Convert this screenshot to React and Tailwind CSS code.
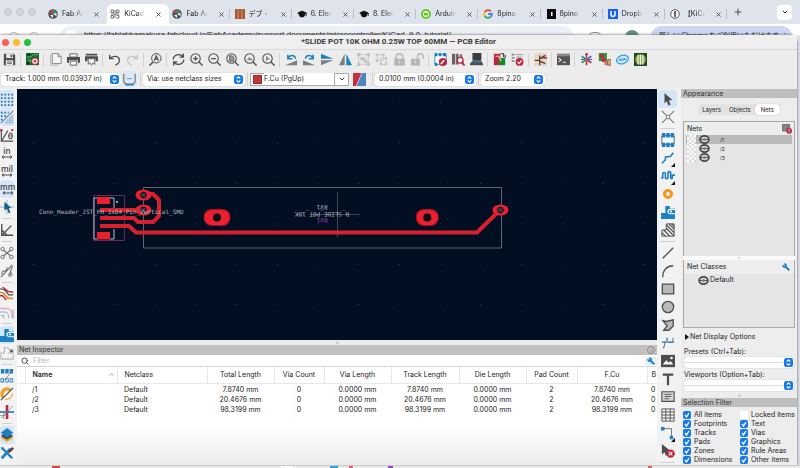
import React from "react";
import { X, Plus, ChevronDown, ChevronUp, Search, GraduationCap, Wrench } from "lucide-react";

const G = "#4d4d4d";
const B = "#1a81c4";
const R = "#bf2641";
const L = "#a9a9a9";

const icons = {
  save: (
    <>
      <path d="M1 1h12l2 2v12H1z" fill={G} />
      <path d="M4 1h8v5H4zM3.500 9h9v6h-9z" fill="#ededed" />
      <path d="M9 2h2v3H9z" fill={G} />
      <path d="M5 11h6M5 13h6" stroke={G} />
    </>
  ),
  board: (
    <>
      <path d="M0 0h16v15H0z" fill="#146b2a" />
      <path d="M1 5h5l3-3h6M2 9h4M3 13l3-3" stroke="#5fd06e" fill="none" />
      <path d="M2 1h3v2H2zM1 11h3v3H1z" fill="#0b2e12" />
      <circle cx="11" cy="10" r="4" fill="#eee" stroke={R} strokeWidth="1.300" />
      <circle cx="11" cy="10" r="1.500" fill={R} />
    </>
  ),
  page: (
    <>
      <path d="M2 2v13h10" fill="none" stroke={L} />
      <path d="M4 .5h7l4 4V13H4z" fill="#f4f4f4" stroke="#777" />
      <path d="M11 .5v4h4" fill="none" stroke="#777" />
    </>
  ),
  print: (
    <>
      <path d="M3.500 1h9v4h-9z" fill="#f5f5f5" stroke={G} />
      <path d="M0 5h16v7h-2.500V9h-11v3H0z" fill={G} />
      <path d="M4 10h8v5H4z" fill="#f5f5f5" stroke={G} />
    </>
  ),
  plot: (
    <>
      <path d="M1 1h14v2H1zM0 4h16v6h-3V7H3v3H0z" fill={G} />
      <path d="M4 7h8v7l-2-2-2 3-2-3-2 2z" fill="#f5f5f5" stroke={G} />
    </>
  ),
  undo: <path d="M2 2v5h5M2 7c3-4 12-4 12 2 0 3-2 5-5 6" fill="none" stroke={G} strokeWidth="1.600" />,
  redo: <path d="M14 2v5H9M14 7C11 3 2 3 2 9c0 3 2 5 5 6" fill="none" stroke="#c4c4c4" strokeWidth="1.600" />,
  find: (
    <>
      <circle cx="9" cy="6.500" r="5.800" fill="none" stroke={G} strokeWidth="1.200" />
      <path d="M5 11l-4.500 4.500" stroke={G} strokeWidth="1.800" />
      <path d="M6.500 9.500L9 3.500l2.500 6M7.500 7.500h3" fill="none" stroke={G} strokeWidth="1.500" />
    </>
  ),
  refresh: (
    <path d="M1.500 8C1.500 2 10 0 13.500 4.500M14 .5v4.500H9.500M14.500 8c0 6-8.500 8-12 3.500M2 15.500V11h4.500" fill="none" stroke={G} strokeWidth="1.600" />
  ),
  zin: (
    <>
      <circle cx="6.800" cy="6.800" r="5.800" fill="none" stroke={G} strokeWidth="1.300" />
      <path d="M11 11l4.500 4.500M4 6.800h5.600M6.800 4v5.600" stroke={G} strokeWidth="1.600" />
    </>
  ),
  zout: (
    <>
      <circle cx="6.800" cy="6.800" r="5.800" fill="none" stroke={G} strokeWidth="1.300" />
      <path d="M11 11l4.500 4.500M4 6.800h5.600" stroke={G} strokeWidth="1.600" />
    </>
  ),
  zfit: (
    <>
      <circle cx="6.800" cy="6.800" r="5.800" fill="none" stroke={G} strokeWidth="1.300" />
      <path d="M11 11l4.500 4.500" stroke={G} strokeWidth="1.600" />
      <path d="M4.500 3.500h3l2 1.500v5h-5z" fill="#999" stroke={G} />
    </>
  ),
  zobj: (
    <>
      <circle cx="6.800" cy="6.800" r="5.800" fill="none" stroke={G} strokeWidth="1.300" />
      <path d="M11 11l4.500 4.500" stroke={G} strokeWidth="1.600" />
      <path d="M3.500 9l3-4 1.500 2 1-1 1.500 3z" fill="#888" />
    </>
  ),
  zsel: (
    <>
      <circle cx="6.800" cy="6.800" r="5.800" fill="none" stroke={G} strokeWidth="1.300" />
      <path d="M11 11l4.500 4.500" stroke={G} strokeWidth="1.600" />
      <path d="M5 3l5 5H7.500L5 10z" fill="#888" />
    </>
  ),
  ccw: (
    <>
      <path d="M0 15l15-6v6z" fill="#7d7d7d" />
      <path d="M4 6c2-4 8-4 9 1M3.500 2v5H9" fill="none" stroke={B} strokeWidth="2" />
    </>
  ),
  cw: (
    <>
      <path d="M15 15L0 9v6z" fill="#7d7d7d" />
      <path d="M12 6C10 2 4 2 3 7M12.500 2v5H7" fill="none" stroke={B} strokeWidth="2" />
    </>
  ),
  flip: (
    <>
      <path d="M0 1l15 6H0z" fill={B} />
      <path d="M0 15l15-6H0z" fill="#7d7d7d" />
    </>
  ),
  mirror: (
    <>
      <path d="M7 1v14H0z" fill="#7d7d7d" />
      <path d="M9 1v14h7z" fill={B} />
    </>
  ),
  group: (
    <>
      <path d="M2 2h12v12H2z" fill="none" stroke="#c3c3c3" />
      <path d="M0 0h4v4H0zM12 0h4v4h-4zM0 12h4v4H0zM12 12h4v4h-4zM4 5h6v4H4zM8 8h5v4H8z" fill="#c3c3c3" />
    </>
  ),
  ungroup: (
    <>
      <path d="M3 2h7v7H3zM7 6h7v8H7z" fill="none" stroke="#c3c3c3" />
      <path d="M1 1h3v3H1zM9 1h3v3H9zM1 8h3v3H1zM12 5h3v3h-3zM12 12h3v3h-3zM6 12h3v3H6z" fill="#c3c3c3" />
    </>
  ),
  lock: (
    <>
      <path d="M4 8V4.500C4 0 12 0 12 4.500V8" fill="none" stroke="#bbb" strokeWidth="2" />
      <path d="M1.500 7h13v8.500h-13z" fill="#b5b5b5" />
      <path d="M8 9v4" stroke="#ddd" strokeWidth="1.500" />
    </>
  ),
  unlock: (
    <>
      <path d="M8 8V4.500C8 0 15 0 15 4.500V7" fill="none" stroke="#bbb" strokeWidth="2" />
      <path d="M0 7h11v8.500H0z" fill="#b5b5b5" />
      <path d="M5.500 9v4" stroke="#ddd" strokeWidth="1.500" />
    </>
  ),
  fped: (
    <>
      <path d="M1 2h14v12H1z" fill="#fff" stroke={B} />
      <path d="M1 0h3v4H1zM6 0h3v4H6zM11 0h4v4h-4zM1 12h3v4H1z" fill={B} />
      <circle cx="11" cy="11" r="5" fill={R} />
      <path d="M8.500 13.500l4-4.500" stroke="#fff" strokeWidth="1.800" />
    </>
  ),
  browse: (
    <>
      <path d="M0 1h4v13H0zM5 1h3v13H5z" fill="#636363" />
      <path d="M9 2l3-1 3 12-3 1z" fill="#7a7a7a" />
      <circle cx="10" cy="9" r="3.500" fill="#eee" stroke={R} strokeWidth="1.500" />
      <path d="M12 12l3.500 3.500" stroke={R} strokeWidth="2" />
    </>
  ),
  view3d: (
    <>
      <path d="M3 0h11v9H3z" fill="#3c3c3c" />
      <path d="M0 13l4-4h9l3 4v2H0z" fill={G} />
      <path d="M3 11h10" stroke={B} strokeWidth="1.500" />
    </>
  ),
  update: (
    <>
      <path d="M1 1h8v14H1z" fill={R} />
      <path d="M7 6h8v9H7z" fill="#178a2c" />
      <path d="M3 4h4l3 6" stroke="#f3c9b5" fill="none" strokeWidth="1.500" />
      <path d="M9 1h4v4M15 6V2" stroke="#333" fill="none" strokeWidth="1.300" />
    </>
  ),
  drc: (
    <>
      <path d="M1 2h3M1 6h3M1 10h3" stroke={G} strokeWidth="2" strokeDasharray="1 1" />
      <path d="M6 2h9M6 5h8" stroke="#888" />
      <circle cx="10.500" cy="11" r="4.800" fill={R} />
      <path d="M8 11l2 2 3-4" stroke="#fff" strokeWidth="1.500" fill="none" />
    </>
  ),
  sch: (
    <>
      <path d="M0 0h16v16H0z" fill="#e3d7c5" />
      <path d="M1 9h6M7 3v12M7 7l7-4M7 10l7 3" stroke="#553c30" strokeWidth="1.600" fill="none" />
      <path d="M9 6h7" stroke={R} strokeWidth="2" />
    </>
  ),
  term: (
    <>
      <path d="M0 1h16v14H0z" fill="#545454" />
      <path d="M0 1h16v3H0z" fill="#8b8b8b" />
      <path d="M2 6l3 2.500L2 11M7 11.500h4" stroke="#eee" fill="none" strokeWidth="1.300" />
    </>
  ),
  star: (
    <>
      <path d="M8 8V1M8 8l6-4" stroke="#7c54a8" strokeWidth="2" />
      <path d="M8 8l6 4M8 8v7" stroke={R} strokeWidth="2" />
      <path d="M8 8l-6 4M8 8L2 4" stroke="#3b8f61" strokeWidth="2" />
      <path d="M1 8h14" stroke={B} strokeWidth="1.500" />
      <circle cx="8" cy="1.500" r="1.500" fill={R} />
      <circle cx="8" cy="8" r="1.700" fill="#cf5b3e" />
    </>
  ),
  plug: (
    <>
      <path d="M1 0h10v10H1z" fill="#3f8f36" />
      <path d="M2 2h5v4H2z" fill={R} />
      <circle cx="7" cy="9" r="2.500" fill={R} />
      <path d="M8 10h4v5H8z" fill="#c87561" />
      <path d="M12 8h4v7h-4z" fill="#d9b28b" stroke="#8c4b39" />
    </>
  ),
  ibom: (
    <>
      <ellipse cx="8" cy="8" rx="7.500" ry="5" transform="rotate(-20 8 8)" fill="#d8eefb" stroke="#2a9fe6" strokeWidth="1.500" />
      <path d="M3 9l2-2v3l2-3 1 3 2-4 1 3 2-3" stroke="#1d86cf" fill="none" />
    </>
  ),
  pipes: (
    <>
      <path d="M0 0h16v16H0z" fill="#23451a" />
      <circle cx="8" cy="8" r="6.500" fill="#8fae63" />
      <path d="M5 2v12M8 2v12M11 2v12" stroke="#e9efcf" strokeWidth="1.500" />
    </>
  ),
  trackw: (
    <>
      <path d="M1 1v9c0 5 14 5 14 0V1" fill="none" stroke="#777" strokeWidth="1.500" />
      <path d="M5 7h6" stroke="#777" />
      <path d="M3 14.500h10" stroke={B} strokeWidth="1.800" />
    </>
  ),
  layers2: (
    <>
      <path d="M0 0h16v16H0z" fill="#4c86c6" />
      <path d="M0 0h11L4 16H0z" fill="#c5303a" />
      <path d="M11 0L4 16" stroke="#ddd" />
    </>
  ),
  grid: <path d="M1 3h15M1 7h15M1 11h15M1 15h15" stroke="#3173a3" strokeWidth="2" strokeDasharray="2 2" />,
  gridov: (
    <>
      <path d="M1 3h9M1 7h6M1 11h3" stroke="#3173a3" strokeWidth="2" strokeDasharray="2 2" />
      <path d="M1 15L15 1" stroke={G} />
      <path d="M14 5v10M11 8v7M8 11v4M5 14.500h10M8 11.500h7M11 8.500h4" stroke="#7fa6c4" strokeWidth=".8" />
    </>
  ),
  polar: (
    <>
      <path d="M1.500 2v13H15M1.500 15L9 3" fill="none" stroke={G} strokeWidth="1.300" />
      <circle cx="1.500" cy="2.500" r="1.500" fill={R} />
      <circle cx="14" cy="2.500" r="1.300" fill={R} />
      <ellipse cx="12" cy="9" rx="2" ry="3.200" fill="none" stroke={G} strokeWidth="1.200" />
      <path d="M10 9h4" stroke={G} />
    </>
  ),
  cursor: (
    <>
      <path d="M8 0v16M0 8h16" stroke="#79afd0" />
      <path d="M5 2l8 7-3 .5 2 5-2 .5-2-5-3 2z" fill="#1b5d86" />
    </>
  ),
  angle: <path d="M2 1v13h13M2 14L13 3M2 8l6 6" fill="none" stroke={G} strokeWidth="1.500" />,
  rats: (
    <>
      <path d="M3 4l10 8M3 12l10-8" stroke="#666" strokeWidth="1.200" />
      <g fill="#ededed" stroke="#666"><circle cx="3" cy="3.500" r="2" /><circle cx="3" cy="12.500" r="2" /><circle cx="13" cy="3.500" r="2" /><circle cx="13" cy="12.500" r="2" /></g>
    </>
  ),
  rats2: (
    <>
      <path d="M2 12C2 4 8 12 8 4M10 14c4-2 0-8 5-11M1 15L14 1" fill="none" stroke="#666" strokeWidth="1.200" />
      <circle cx="12" cy="12" r="2" fill="none" stroke="#666" />
    </>
  ),
  diff: (
    <>
      <path d="M0 2l5 1 5 6h5" fill="none" stroke={G} strokeWidth="1.300" />
      <path d="M0 6l4 1 5 6h6" fill="none" stroke="#df8c2c" strokeWidth="1.800" />
      <path d="M0 10l3 0 4 5M3 0l6 5 6 1" fill="none" stroke={R} strokeWidth="1.500" />
    </>
  ),
  dim: (
    <>
      <path d="M0 4h7c5 0 7 3 7 11" fill="none" stroke="#e9a9ae" strokeWidth="1.800" />
      <path d="M0 8h5c4 0 5 2 5 7" fill="none" stroke="#9ec4de" strokeWidth="1.500" />
      <path d="M1 12h3v3M15 5v10" fill="none" stroke="#aaa" strokeWidth="1.200" />
    </>
  ),
  zone: (
    <>
      <path d="M5 1h5v3h6v12H0V9h5z" fill={B} />
      <path d="M16 5h-5c-4 0-4 5 0 5h5" fill="none" stroke="#fff" strokeWidth="1.300" />
      <circle cx="11.500" cy="7.500" r="1.200" fill="#fff" />
    </>
  ),
  zoneo: (
    <>
      <path d="M5 2h6M5 2v6H1v7h14V9" fill="none" stroke="#999" strokeWidth="1.200" strokeDasharray="2 1" />
      <path d="M9 4h6v4H9" fill="none" stroke="#aaa" />
      <circle cx="13" cy="6" r="1.500" fill={G} />
    </>
  ),
  pads: (
    <>
      <path d="M1 0h4v5H1zM6 0h4v5H6zM11 0h4v5h-4z" fill={B} />
      <path d="M2 15L15 2" stroke="#b26b4a" />
      <path d="M1 15v-4h3v4zM6.500 15v-4h3v4zM11.500 15v-4h3v4z" fill="none" stroke={B} />
    </>
  ),
  viaf: (
    <>
      <path d="M4 12A5.500 5.500 0 0 1 12 4" fill="none" stroke="#f0a024" strokeWidth="4" />
      <path d="M1 15L15 1" stroke={G} strokeWidth="1.200" />
      <path d="M6 14c5 1 8-3 8-7" fill="none" stroke="#f0a024" strokeWidth="1.200" />
    </>
  ),
  trackf: (
    <>
      <path d="M8 0v16" stroke={R} strokeWidth="3" />
      <path d="M0 8h16" stroke="#3a7bb3" strokeWidth="2" />
      <path d="M1 15L15 1M4 8v8M0 12h8" stroke="#888" strokeWidth=".8" />
    </>
  ),
  layers: (
    <>
      <path d="M8 7l7 4-7 5-7-5z" fill="#f0a024" />
      <path d="M8 4l7 5-7 4-7-4z" fill="#444" />
      <path d="M8 0l7 5.500L8 11 1 5.500z" fill={B} />
    </>
  ),
  tools: (
    <>
      <path d="M2 14L12 3" stroke={B} strokeWidth="3" />
      <path d="M3 3l11 11" stroke={B} strokeWidth="2.500" />
      <path d="M1 1l4 1-3 3z" fill={B} />
      <path d="M9 6l5-5 2 2-5 5z" fill="#6b3b3b" />
    </>
  ),
  arrow: <path d="M4 1l9 8-4 .5 2 5-2.500 1-2-5L4 13z" fill={G} />,
  cross: (
    <>
      <path d="M1 1l14 14M15 1L1 15" stroke="#777" strokeWidth="1.200" />
      <path d="M8 5.500L10.500 8 8 10.500 5.500 8z" fill="#eee" stroke="#777" />
    </>
  ),
  fp: (
    <>
      <path d="M1 3h14v10H1z" fill="#f5f5f5" stroke="#555" />
      <path d="M1 0h4v5H1zM6 0h4v5H6zM11 0h4v5h-4zM1 11h4v5H1zM6 11h4v5H6zM11 11h4v5h-4z" fill={B} />
    </>
  ),
  route: <path d="M1 14l4-4V7l6-1 3-4" fill="none" stroke={B} strokeWidth="1.800" />,
  tune: <path d="M0 10h2V5q1.500-2 3 0v5q1.500 2 3 0V4q1.500-2 3 0v6q1.500 2 2 0V7h3" fill="none" stroke={B} strokeWidth="1.800" />,
  via: <circle cx="8" cy="8" r="4" fill="none" stroke="#f19a1f" strokeWidth="3.500" />,
  rule: (
    <>
      <path d="M1 8h5V1h9v14H1z" fill="none" stroke={G} />
      <path d="M1 11l4 4M3 8l7 7M6 6l9 9M6 2l9 9M9 1l6 6M12 1l3 3" stroke={G} strokeWidth="1.400" />
    </>
  ),
  line: <path d="M2 14L14 2" stroke={G} strokeWidth="1.500" />,
  arc: <path d="M2 15C2 7 7 2 14 2" fill="none" stroke={G} strokeWidth="1.500" />,
  rect: <path d="M1.500 2.500h13v11h-13z" fill="#b9b9b9" stroke={G} strokeWidth="1.500" />,
  circ: <circle cx="8" cy="8" r="6.500" fill="#b9b9b9" stroke={G} strokeWidth="1.500" />,
  poly: <path d="M2 3l4 1 8-2v7l-5 5H3l4-5z" fill="#b9b9b9" stroke={G} strokeWidth="1.500" />,
  bez: (
    <>
      <path d="M2 14c5-3-1-9 6-7s5-2 6-5" fill="none" stroke="#777" strokeWidth="1.200" />
      <path d="M1 7h5M9 7h6M7 2v4" stroke={B} strokeWidth="1.500" />
    </>
  ),
  img: (
    <>
      <path d="M0 1h16v14H0z" fill={G} />
      <path d="M2 12l4-5 3 3 2-2 3 4z" fill="#fff" />
      <circle cx="12" cy="4.500" r="1.500" fill="#fff" />
    </>
  ),
  tee: <path d="M2 3h12M8 3v12" stroke={G} strokeWidth="2.500" />,
  tbox: (
    <>
      <path d="M1 2h14v11H1z" fill="#d5d5d5" stroke={G} strokeWidth="1.300" />
      <path d="M4 5h8M4 7.500h8M4 10h5" stroke={G} />
    </>
  ),
  tbl: <path d="M1 1h14v14H1zM1 4.500h14M1 8h14M1 11.500h14M5.500 1v14M10.500 1v14" fill="#f3f3f3" stroke={G} />,
  dimn: (
    <>
      <path d="M3 3h9v9" fill="none" stroke="#666" />
      <path d="M0 1h4v4H0zM10 11h4v4h-4z" fill={B} />
    </>
  ),
  del: (
    <>
      <path d="M1 0l10 8-4 .5 1 4-2.500 1-1.500-4L1 12z" fill={G} />
      <circle cx="11" cy="11" r="4.800" fill={R} />
      <path d="M9 9l4 4M13 9l-4 4" stroke="#fff" strokeWidth="1.300" />
    </>
  ),
  netset: (
    <>
      <path d="M0 0h13v12H0z" fill="#777" />
      <path d="M2 3h8M2 6h5M2 9h5" stroke="#aaa" />
      <circle cx="11.500" cy="11" r="4.500" fill={R} />
      <path d="M11.500 8.500v3M11.500 12.500v1" stroke="#fff" strokeWidth="1.500" />
    </>
  ),
};

function Ico({ n, className = "size-3.5" }) {
  return (
    <svg viewBox="0 0 16 16" className={className + " shrink-0"} aria-hidden="true">
      {icons[n]}
    </svg>
  );
}

const tabs = [
  ["fab", "Fab Academy"],
  ["kicad", "KiCad tutorial"],
  ["fab", "Fab Academy"],
  ["debu", "デブ・テ"],
  ["hat", "6. Electronics"],
  ["hat", "8. Electronics"],
  ["arduino", "Arduino"],
  ["google", "8pino - G"],
  ["pino", "8pino"],
  ["dropbox", "Dropbox"],
  ["round", "【KiCad】"],
];

function Favicon({ n }) {
  if (n === "hat") return <GraduationCap className="size-2.5 shrink-0" fill="#111" stroke="#111" />;
  return (
    <svg viewBox="0 0 10 10" className="size-2.5 shrink-0" aria-hidden="true">
      {n === "fab" && (
        <>
          <circle cx="5" cy="5" r="4.800" fill="#4f5560" />
          <path d="M5 5V.4L9 3z" fill="#1d9c54" />
          <path d="M1 3l4-2.500V5z" fill="#e2383c" />
          <path d="M5 5l3.500-1v3z" fill="#fff" />
          <path d="M2 6h3v3z" fill="#fff" />
        </>
      )}
      {n === "kicad" && (
        <path d="M1 1h2.500v2.500H1zM6.500 1H9v2.500H6.500zM1 6.500h2.500V9H1zM5 1v8M1 5h8M6.500 6.500H9V9H6.500" fill="none" stroke="#777" />
      )}
      {n === "debu" && (
        <>
          <path d="M0 0h10v10H0z" fill="#a8553a" />
          <path d="M3 0v10M7 0v10" stroke="#d88b4a" strokeWidth="1.200" />
          <circle cx="5" cy="3" r="1.300" fill="#4f8f3b" />
        </>
      )}
      {n === "arduino" && (
        <>
          <circle cx="5" cy="5" r="4" fill="#e9f7dd" stroke="#62c821" strokeWidth="1.800" />
          <path d="M3 4h4v2.500H3z" fill="#62c821" />
        </>
      )}
      {n === "google" && (
        <g fill="none" strokeWidth="1.800">
          <path d="M8 2.500A3.900 3.900 0 0 0 1.700 3" stroke="#ea4335" />
          <path d="M1.700 3a4 4 0 0 0 0 4" stroke="#fbbc05" />
          <path d="M1.700 7A3.900 3.900 0 0 0 7.500 8" stroke="#34a853" />
          <path d="M7.500 8A3.600 3.600 0 0 0 8.900 5H5" stroke="#4285f4" />
        </g>
      )}
      {n === "pino" && (
        <>
          <path d="M1 0h9v10H1z" fill="#0b0b0b" />
          <path d="M5 3h1.500v4H5z" fill="#fff" />
        </>
      )}
      {n === "dropbox" && (
        <>
          <path d="M0 0h10v10H0z" fill="#1661f5" />
          <path d="M3 2v3.500c0 2.500 4 2.500 4 0V2" fill="none" stroke="#fff" strokeWidth="1.500" />
        </>
      )}
      {n === "round" && (
        <>
          <circle cx="5" cy="5" r="4.300" fill="#fff" stroke="#333" strokeWidth=".8" />
          <path d="M4 2h2v6H4z" fill="#666" />
        </>
      )}
    </svg>
  );
}

function Browser() {
  return (
    <div className="flex h-[35px] shrink-0 flex-col bg-[#dfe3ec]">
      <div className="flex h-6 shrink-0 items-center">
        <div className="flex w-[45px] gap-1 pl-1">
          {[0, 1, 2].map((i) => (
            <span key={i} className="size-2 rounded-full border border-[#c3c7cf] bg-[#cfd3db]" />
          ))}
        </div>
        <nav aria-label="Tabs" className="flex h-full flex-1">
          {tabs.map(([ic, t], i) => (
            <div
              key={i}
              className={
                "mt-1 flex h-5 min-w-0 flex-1 items-center gap-1 pr-2 pl-[3px] " +
                (i === 1 ? "rounded-t-md bg-white" : "")
              }
            >
              <Favicon n={ic} />
              <a href="#tab" className="w-0 flex-1 overflow-hidden mask-r-from-60% mask-r-to-100% font-['Inter','Noto_Sans_CJK_JP',sans-serif] text-[7px] leading-4 whitespace-nowrap text-[#222]">
                {t}
              </a>
              <button aria-label="Close tab" className="ml-1.5">
                <X className="size-[7px]" strokeWidth={3} color="#444" />
              </button>
              <span className={"-mr-1.5 h-2.5 w-px " + (i > 1 ? "bg-[#b9bec8]" : "")} />
            </div>
          ))}
        </nav>
        <div className="flex w-[71px] items-center justify-between pr-2 pl-1">
          <button aria-label="New tab"><Plus className="size-2.5" strokeWidth={2} color="#333" /></button>
          <button aria-label="Search tabs" className="grid size-[15px] place-items-center rounded bg-white">
            <ChevronDown className="size-2" strokeWidth={3} color="#333" />
          </button>
        </div>
      </div>
      <div className="flex flex-1 items-start gap-3 overflow-hidden bg-white px-2 pt-0.5">
        <div className="flex w-[40px] gap-2 pt-1.5">
          <span className="size-3 rounded-full border border-[#bbb]" />
          <span className="size-3 rounded-full border border-[#bbb]" />
        </div>
        <div className="flex h-5 flex-1 items-start gap-1.5 overflow-hidden rounded-full bg-[#edf0f7] pt-1 pl-1">
          <span className="size-3.5 rounded-full bg-white" />
          <span className="font-['Liberation_Sans',sans-serif] text-[8px] leading-[10px] whitespace-nowrap text-[#222]">
            https://fablabkamakura.fabcloud.io/FabAcademy/support-documents/microcontroller/KiCad_9.0_tutorial/
          </span>
        </div>
        <span className="mt-1.5 ml-1 size-3 rounded border border-[#888]" />
        <span className="mt-1 ml-3 size-3.5 rounded-full bg-[#5f8f78]" />
        <span className="h-5 w-[141px] overflow-hidden rounded-full bg-[#ccd8f3] pt-1 pl-2 font-['Noto_Sans_CJK_JP',sans-serif] text-[7px] leading-[10px] whitespace-nowrap text-[#222]">
          新しい Chrome をご利用いただけます ⋮
        </span>
      </div>
    </div>
  );
}

const bar = [
  "save", "|", "board", "|", "page", "print", "plot", "|", "undo", "redo", "|", "find", "|",
  "refresh", "zin", "zout", "zfit", "zobj", "zsel", "|", "ccw", "cw", "flip", "mirror", "group",
  "ungroup", "lock", "unlock", "|", "fped", "browse", "view3d", "|", "update", "drc", "|", "sch",
  "|", "term", "|", "star", "plug", "ibom", "pipes",
];

function Stepper() {
  return (
    <svg viewBox="0 0 10 10" className="size-[9px] shrink-0" aria-hidden="true">
      <rect width="10" height="10" rx="2.500" fill="#1478f0" />
      <path d="M3 4l2-2 2 2M3 6l2 2 2-2" fill="none" stroke="#fff" strokeWidth="1.200" />
    </svg>
  );
}

function Select({ label, value, className }) {
  return (
    <div className={"flex h-[13px] shrink-0 items-center rounded-[3px] bg-white pr-0.5 pl-1 shadow-[0_0_1px_#999] " + className}>
      <select aria-label={label} className="min-w-0 flex-1 appearance-none bg-transparent font-['Inter',sans-serif] text-[7px] leading-3 text-[#1c1c1c]">
        <option>{value}</option>
      </select>
      <Stepper />
    </div>
  );
}

function Rule() {
  return <span className="mx-0.5 h-3.5 w-px shrink-0 bg-[#d3d3d3]" />;
}

function TopBars() {
  return (
    <>
      <header className="flex h-[15px] shrink-0 items-center border-b border-[#d8d8d8] bg-[#f0efef]">
        <div className="flex w-8 shrink-0 gap-1 pl-0.5">
          <span className="size-[7px] shrink-0 rounded-full bg-[#fe5f57]" />
          <span className="size-[7px] shrink-0 rounded-full bg-[#fdbc2e]" />
          <span className="size-[7px] shrink-0 rounded-full bg-[#29c03f]" />
        </div>
        <h1 className="flex-1 pr-8 text-center font-['Roboto',sans-serif] text-[8px] leading-3 font-bold text-[#3a3a3a]">
          *SLIDE POT 10K OHM 0.25W TOP 60MM — PCB Editor
        </h1>
      </header>
      <div className="flex h-[19px] shrink-0 items-center">
        {bar.map((n, i) =>
          n === "|" ? (
            <span key={i} className="flex w-[5px] shrink-0 justify-center"><i className="h-3.5 w-px bg-[#d3d3d3]" /></span>
          ) : (
            <button key={i} aria-label={n} className="grid w-[18px] shrink-0 place-items-center">
              <Ico n={n} className="size-[13px]" />
            </button>
          )
        )}
      </div>
      <div className="flex h-5 shrink-0 items-center pl-px">
        <Select label="Track width" value="Track: 1.000 mm (0.03937 in)" className="w-[120px]" />
        <button aria-label="Auto track width" className="mx-px grid h-4 w-[15px] place-items-center rounded bg-[#dbe9f7]"><Ico n="trackw" className="size-[13px]" /></button>
        <Rule />
        <Select label="Via size" value="Via: use netclass sizes" className="w-[102px]" />
        <Rule />
        <div className="flex h-[13px] w-[99px] shrink-0 items-center border border-[#aaa] bg-white">
          <span className="mx-0.5 size-[9px] shrink-0 border border-[#8e2b2b] bg-[#c83434]" />
          <select aria-label="Layer" className="min-w-0 flex-1 appearance-none bg-white font-['Inter',sans-serif] text-[7px] leading-3 text-[#1c1c1c]">
            <option>F.Cu (PgUp)</option>
          </select>
          <span className="grid h-full w-3.5 place-items-center border-l border-[#aaa]"><ChevronDown className="size-2" strokeWidth={3} color="#444" /></span>
        </div>
        <button aria-label="Layer pair" className="mx-1"><Ico n="layers2" className="size-[13px]" /></button>
        <Rule />
        <Select label="Grid" value="0.0100 mm (0.0004 in)" className="w-[101px]" />
        <Rule />
        <Select label="Zoom" value="Zoom 2.20" className="w-[64px]" />
      </div>
    </>
  );
}

const left = [
  ["grid", 1], ["gridov", 1], ["polar"], ["in"], ["mil"], ["mm", 1], ["cursor"], "|", ["angle"], "|",
  ["rats"], ["rats2"], "|", ["diff"], ["dim"], "|", ["zone", 1], ["zoneo"], "|", ["pads"], ["viaf"],
  ["trackf"], "|", ["layers", 1], ["tools"],
];
const right = [
  ["arrow", 1], ["cross"], "|", ["fp"], ["route"], ["tune"], ["via"], ["zone"], ["rule"], "|", ["line"],
  ["arc"], ["rect"], ["circ"], ["poly"], ["bez"], ["img"], ["tee"], ["tbox"], ["tbl"], ["dimn"], ["del"], "|",
];

function SideBar({ items, className, label }) {
  return (
    <div role="toolbar" aria-label={label} className={"flex shrink-0 flex-col overflow-hidden bg-[#f2f2f2] pt-px " + className}>
      {items.map((it, i) => {
        if (it === "|") return <span key={i} className="flex h-[5px] shrink-0 items-center px-0.5"><i className="h-px w-full bg-[#cfcfcf]" /></span>;
        const [n, on] = it;
        const unit = n === "in" || n === "mil" || n === "mm";
        const corner = n === "route" || n === "tune" || n === "dimn";
        return (
          <button key={i} aria-label={n} className={"relative grid h-[18px] shrink-0 place-items-center " + (on ? "rounded-sm bg-[#d5e6f8]" : "")}>
            {unit ? (
              <span className="flex flex-col items-center">
                <b className="font-['Open_Sans',sans-serif] text-[8px] leading-2 font-semibold text-[#444]">{n}</b>
                <svg viewBox="0 0 12 4" className="h-1 w-3" aria-hidden="true"><path d="M1 2h10M3 .5L1 2l2 1.500M9 .5L11 2 9 3.500" stroke={G} fill="none" /></svg>
              </span>
            ) : (
              <Ico n={n} />
            )}
            {corner && <svg viewBox="0 0 4 4" className="absolute right-0.5 bottom-0 size-1" aria-hidden="true"><path d="M4 0v4H0z" fill="#111" /></svg>}
          </button>
        );
      })}
    </div>
  );
}

function Pcb() {
  const dots = [];
  for (let r = 0; r < 6; r++) for (let c = 0; c < 22; c++) dots.push([33.3 + c * 40.7, 102 + r * 40.6, (c + r) % 3 === 1]);
  const red = "#d8202c";
  return (
    <svg viewBox="17 89 640 251" preserveAspectRatio="xMinYMin slice" className="block min-h-0 w-full flex-1 bg-[#020e22]" role="img" aria-label="Board">
      {dots.map(([x, y, b], i) => (
        <rect key={i} x={x - 0.5} y={y - 0.5} width="1" height="1" fill={b ? "#3f4c50" : "#1e2c3c"} />
      ))}
      <path d="M143.500 187.500H501.500V248H143.500z" fill="none" stroke="#6b7178" strokeWidth=".9" />
      <path d="M337.500 192v45M310 214.500h50" stroke="#4e5662" strokeWidth=".8" />
      <path d="M93.500 195.500h31v45h-31z" fill="none" stroke="#6f1f63" />
      <path d="M97 198h-3v14M97 239h-3v-14M94 212v13M110 198h4v10M110 239h4v-10" fill="none" stroke="#b9bcc0" />
      <circle cx="117" cy="202" r="1" fill="#cfd2d4" />
      <path d="M97 197h13v7H97zM97 232h13v7.500H97z" fill="#e81f30" />
      <g fill="none" stroke={red} strokeWidth="4" strokeLinejoin="round">
        <path d="M100 210H144" />
        <path d="M100 218H134L138 222H153L159 216V200L153 194H144" />
        <path d="M100 226H129L136 232.500H477L500 210" />
      </g>
      {[[143.500, 195], [143.500, 210], [500.500, 210]].map(([x, y]) => (
        <g key={x + "-" + y}>
          <ellipse cx={x} cy={y} rx="8" ry="5.500" fill="#e81f30" />
          <circle cx={x} cy={y} r="3.200" fill="#0c1420" />
          <path d={`M${x - 2} ${y - 2}l4 4M${x + 2} ${y - 2}l-4 4`} stroke="#8d9a90" strokeWidth=".6" />
        </g>
      ))}
      {[[217, 13.5], [427.300, 11.5]].map(([x, rx]) => (
        <g key={x}>
          <rect x={x - rx} y="209" width={rx * 2} height="17" rx="8" fill="#a3101f" />
          <rect x={x - rx + 1} y="210" width={rx * 2 - 2} height="15" rx="7.500" fill="#ea2030" />
          <circle cx={x} cy="217.500" r="4" fill="#0a1018" />
        </g>
      ))}
      <g fontFamily="'DejaVu Sans Mono', monospace" fontSize="6" fill="#b3b9c0">
        <text x="39" y="214">Conn_Header_JST_PH_1x04_Pin_Vertical_SMD</text>
        <g textAnchor="middle">
          <text x="322" y="209" transform="rotate(180 322 207)">RV1</text>
          <text x="322" y="215.500" transform="rotate(180 322 213.500)">R_SLIDE_POT_10K</text>
          <text x="322" y="221.500" fill="#b23bb5" transform="rotate(180 322 219.500)">RV1</text>
        </g>
      </g>
    </svg>
  );
}

const cols = ["Name", "Netclass", "Total Length", "Via Count", "Via Length", "Track Length", "Die Length", "Pad Count", "F.Cu", "B"];
const rows = [
  ["/1", "7.8740 mm"],
  ["/2", "20.4676 mm"],
  ["/3", "98.3199 mm"],
].map(([n, l]) => [n, "Default", l, "0", "0.0000 mm", l, "0.0000 mm", "2", l, "0"]);
const sides = (i) => (i < 2 ? "pl-[7px] text-left" : i === 9 ? "pl-1 text-left" : "text-center");

function Inspector() {
  return (
    <section className="flex h-[125px] shrink-0 flex-col font-['Inter',sans-serif] text-[7px] text-[#222]">
      <div className="flex h-[5px] items-center justify-center bg-[#ececec]"><i className="size-[3px] rounded-full bg-[#ccc]" /></div>
      <div className="flex h-[10px] shrink-0 items-center justify-between bg-[#c1c1c1] pr-0.5 pl-0.5">
        <h2 className="leading-[10px] text-[#333]">Net Inspector</h2>
        <button aria-label="Close" className="grid size-2 place-items-center rounded-full border border-[#8a8a8a]"><X className="size-[5px]" color="#777" /></button>
      </div>
      <div className="flex h-3 shrink-0 items-center border-b border-[#d5d5d5] bg-white pl-1">
        <Search className="mr-1 size-2" strokeWidth={2.5} color="#333" />
        <input aria-label="Filter" placeholder="Filter" className="min-w-0 flex-1 leading-[10px] placeholder:text-[#b5b5b5]" />
        <button aria-label="Configure" className="bg-[#e3eefa] px-0.5"><Wrench className="size-2 -scale-x-100" fill={B} stroke={B} /></button>
      </div>
      <div className="flex-1 overflow-hidden bg-linear-to-b from-white from-60% to-[#ececec]">
        <table className="w-full table-fixed border-collapse">
          <colgroup>
            <col className="w-[8px]" /><col className="w-[92px]" /><col className="w-[90px]" /><col className="w-[67px]" /><col className="w-[50px]" /><col className="w-[67px]" />
            <col className="w-[68px]" /><col className="w-[67px]" /><col className="w-[51px]" /><col className="w-[70px]" /><col />
          </colgroup>
          <thead>
            <tr className="h-4 border-b border-[#e8e8e8] bg-white">
              <td />
              {cols.map((c, i) => (
                <th key={c} scope="col" className={"border-l border-[#e8e8e8] p-0 leading-[10px] whitespace-nowrap " + sides(i) + (i ? " font-normal" : " font-semibold")}>
                  {i ? c : <span className="flex items-center justify-between">{c}<ChevronUp className="mr-0.5 size-[7px]" color="#666" /></span>}
                </th>
              ))}
            </tr>
            <tr className="h-[2px]"><td /></tr>
          </thead>
          <tbody>
            {rows.map((r) => (
              <tr key={r[0]}>
                <td />
                {r.map((v, i) => (
                  <td key={i} className={"p-0 leading-[10px] whitespace-nowrap " + sides(i)}>{v}</td>
                ))}
              </tr>
            ))}
          </tbody>
        </table>
      </div>
    </section>
  );
}

function Eye() {
  return (
    <svg viewBox="0 0 12 10" className="h-[9px] w-[11px] shrink-0" aria-hidden="true">
      <ellipse cx="6" cy="5" rx="4.900" ry="4" fill="#d5d5d5" stroke="#4a4a4a" strokeWidth="2" />
      <path d="M1 5h10" stroke="#4a4a4a" />
      <circle cx="6" cy="5" r="1.500" fill="#777" />
    </svg>
  );
}

const head = "shrink-0 bg-[#bebebe] pl-0.5 text-[7px] leading-[9px] text-[#333]";

function Appearance() {
  const filters = [
    ["All items", 1], ["Locked items", 0], ["Footprints", 1], ["Text", 1], ["Tracks", 1], ["Vias", 1],
    ["Pads", 1], ["Graphics", 1], ["Zones", 1], ["Rule Areas", 1], ["Dimensions", 1], ["Other items", 1],
  ];
  return (
    <aside className="flex w-[116px] shrink-0 flex-col bg-[#ededed] font-['Inter',sans-serif] text-[7px] text-[#222]">
      <h2 className={head}>Appearance</h2>
      <div className="flex h-[23px] shrink-0 items-center justify-center">
        <div role="tablist" className="flex rounded bg-[#e2e2e2] text-[6px] leading-[11px]">
          {["Layers", "Objects", "Nets"].map((t, i) => (
            <button key={t} role="tab" aria-selected={i === 2} className={"px-1 " + (i === 2 ? "rounded bg-white px-1.5 shadow-[0_0_1px_#888]" : "")}>{t}</button>
          ))}
        </div>
      </div>
      <div className="mx-0.5 flex h-[135px] shrink-0 flex-col border border-b-0 border-[#aaa] bg-[#e5e5e5]">
        <div className="flex h-[13px] shrink-0 items-center justify-between bg-[#ededed] pr-0.5 pl-[3px]">
          <h3 className="leading-3">Nets</h3>
          <button aria-label="Net settings"><Ico n="netset" className="size-[10px]" /></button>
        </div>
        <ul className="mx-0.5">
          {["/1", "/2", "/3"].map((n, i) => (
            <li key={n} className={"flex h-[9px] items-center pl-px text-[5px] leading-2 " + (i ? "" : "bg-[#b9b9b9]")}>
              <svg viewBox="0 0 4 4" className="size-[9px]" aria-hidden="true"><path d="M0 0h4v4H0z" fill="#fff" /><path d="M0 0h1v1H0zM2 0h1v1H2zM1 1h1v1H1zM3 1h1v1H3zM0 2h1v1H0zM2 2h1v1H2zM1 3h1v1H1zM3 3h1v1H3z" fill="#d8d8d8" /></svg>
              <span className="mr-2.5 ml-[3px] flex"><Eye /></span>
              {n}
            </li>
          ))}
        </ul>
      </div>
      <div className="mx-0.5 flex h-1 shrink-0 items-center justify-center bg-[#fafafa]"><i className="size-0.5 rounded-full bg-[#ccc]" /></div>
      <div className="mx-0.5 flex h-[68px] shrink-0 flex-col border border-t-0 border-[#aaa] bg-[#e5e5e5]">
        <div className="flex h-3.5 shrink-0 items-center justify-between bg-[#ededed] pr-1 pl-[3px]">
          <h3 className="leading-3">Net Classes</h3>
          <button aria-label="Net class settings"><Wrench className="size-2 -scale-x-100" fill={B} stroke={B} /></button>
        </div>
        <div className="flex items-center gap-px pl-3.5 leading-3"><Eye />Default</div>
      </div>
      <button className="flex h-[18px] shrink-0 items-center pl-1 leading-3">
        <svg viewBox="0 0 4 6" className="mr-px h-1.5 w-1" aria-hidden="true"><path d="M0 0l4 3-4 3z" fill="#111" /></svg>
        Net Display Options
      </button>
      {["Presets (Ctrl+Tab):", "Viewports (Option+Tab):"].map((t) => (
        <label key={t} className="flex h-[23px] shrink-0 flex-col px-[3px] leading-[11px]">
          {t}
          <span className="flex h-[11px] items-center rounded-[3px] bg-white pr-px shadow-[0_0_1px_#999]">
            <select className="h-px min-w-0 flex-1 appearance-none bg-[#ddd]" />
            <Stepper />
          </span>
        </label>
      ))}
      <div className="flex h-1.5 shrink-0 items-center justify-center"><i className="size-[3px] rounded-full bg-[#ccc]" /></div>
      <h2 className={head}>Selection Filter</h2>
      <div className="grid shrink-0 grid-cols-2 pt-[3px] pl-0.5">
        {filters.map(([t, on]) => (
          <label key={t} className="flex h-[9px] items-center gap-[3px] leading-[9px] whitespace-nowrap">
            <span className="grid size-2 shrink-0">
              <input type="checkbox" defaultChecked={!!on} className="peer col-start-1 row-start-1 size-2 appearance-none rounded-[2px] bg-white checked:bg-[#1478f0]" />
              <svg viewBox="0 0 8 8" className="pointer-events-none col-start-1 row-start-1 hidden size-2 peer-checked:block" aria-hidden="true"><path d="M2 4l1.500 2L6 2" fill="none" stroke="#fff" strokeWidth="1.300" /></svg>
            </span>
            {t}
          </label>
        ))}
      </div>
    </aside>
  );
}

export default function App() {
  return (
    <main className="flex h-screen flex-col overflow-hidden bg-[#dfe3ec]">
      <Browser />
      <div className="mr-[3px] flex min-h-0 flex-1 flex-col rounded-tr-lg bg-[#ececec] shadow-[0_0_3px_#555]">
        <TopBars />
        <div className="flex min-h-0 flex-1">
          <SideBar items={left} label="Display" className="w-[17px] pr-[3px]" />
          <div className="flex min-w-0 flex-1 flex-col">
            <Pcb />
            <Inspector />
          </div>
          <SideBar items={right} label="Tools" className="w-6 pr-1 pl-px" />
          <Appearance />
        </div>
      </div>
      <footer className="flex h-[3px] shrink-0 items-end border-t border-[#c9c9c9] bg-[#e9e9e9]">
        <svg viewBox="0 0 800 2" preserveAspectRatio="none" className="h-0.5 w-full" aria-hidden="true">
          <path d="M52 0h8v2h-8z" fill="#e0453a" />
          <path d="M281 0h12v2h-12z" fill="#fff" />
          <path d="M330 0h8v2h-8z" fill="#2a9df4" />
          <path d="M349 0h4v2h-4zM648 0h4v2h-4z" fill="#e85a6a" />
          <path d="M388 0h5v2h-5z" fill="#8a44d6" />
        </svg>
      </footer>
    </main>
  );
}
